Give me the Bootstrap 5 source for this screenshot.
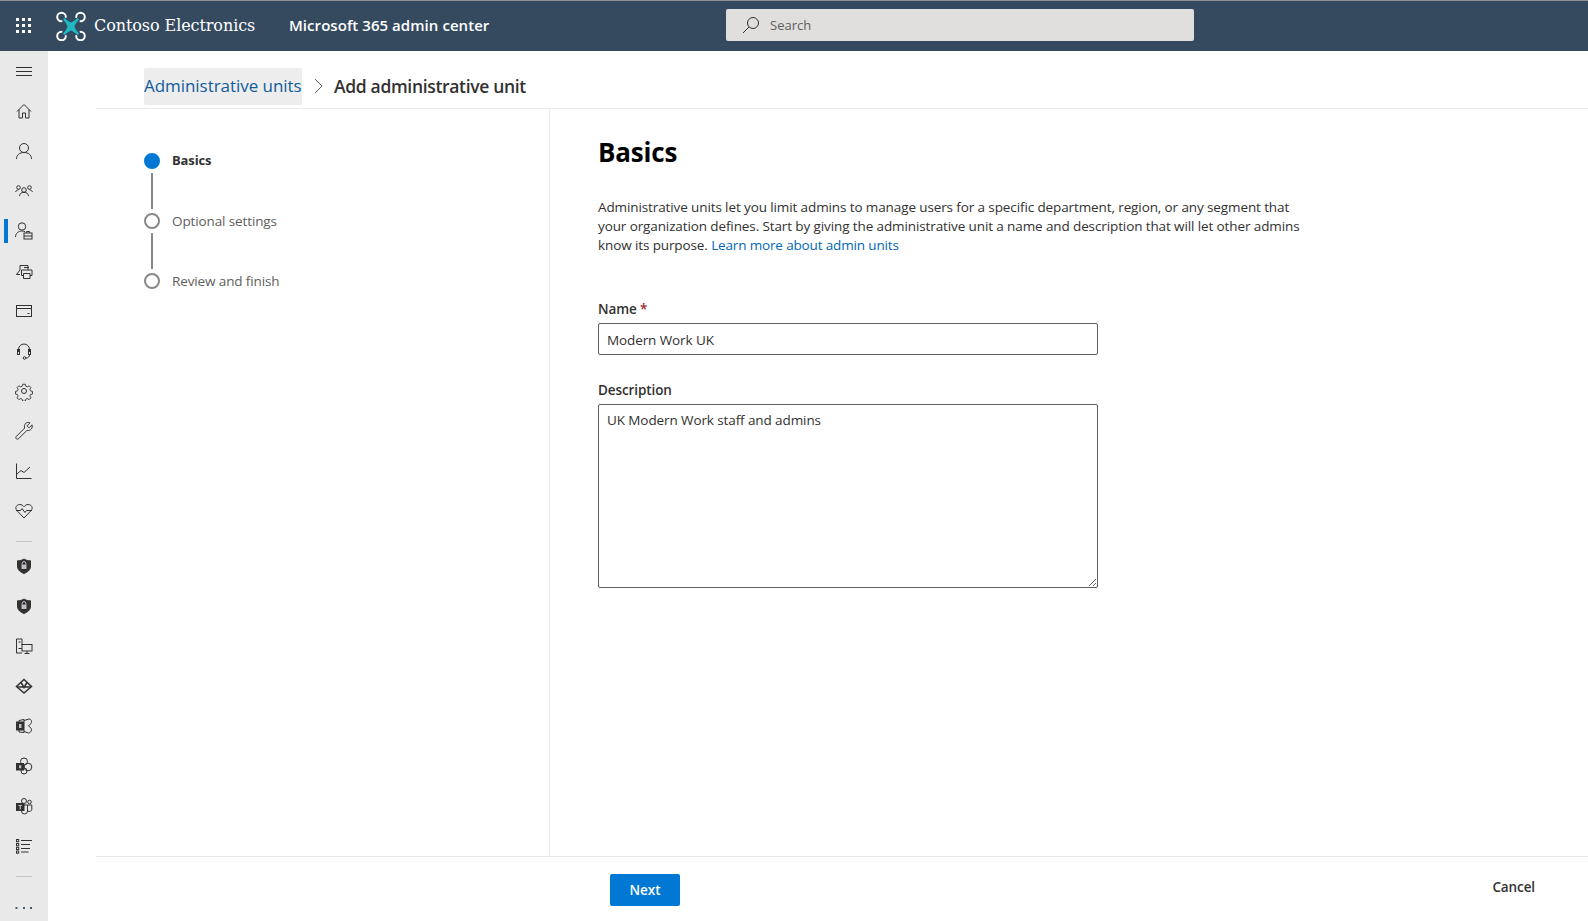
<!DOCTYPE html>
<html lang="en">
<head>
<meta charset="utf-8">
<title>Add administrative unit</title>
<link href="https://cdn.jsdelivr.net/npm/bootstrap@5.3.0/dist/css/bootstrap.min.css" rel="stylesheet">
<style>
html,body{height:100%;}
body{font-family:"Open Sans","Noto Sans",sans-serif;color:#323130;overflow:hidden;background:#fff;font-size:13px;}
.topbar{height:51px;background:#354a5f;border-top:1px solid #8f9396;color:#fff;}
.waffle{width:48px;}
.brand-logo{margin-left:8px;}
.brand-name{font-family:"DejaVu Serif",serif;font-size:16px;margin-left:8px;width:195px;white-space:nowrap;letter-spacing:-.08px;}
.app-name{font-size:15px;font-weight:600;width:437px;white-space:nowrap;letter-spacing:.05px;margin-bottom:2px;}
.search-box{width:468px;height:32px;background:#e1dfdd;border-radius:2px;padding:2px 0 0 16px;color:#605e5c;font-size:13px;margin-bottom:2px;}
.search-box svg{margin:-2px 10px 0 0;}
.shell{height:870px;}
.side{width:48px;background:#e9e9e9;overflow:hidden;}
.side-item{height:40px;flex:0 0 40px;color:#323130;}
.side-item svg{width:20px;height:20px;fill:none;stroke:#323130;stroke-width:1;}
.side-bar-on{left:4px;top:8px;width:4px;height:24px;background:#0078d4;}
.side-rule{width:16px;height:1px;flex:0 0 1px;background:#c8c6c4;margin:10px auto 4px;}
.side-rule2{margin:10px auto 9px;}
.work{margin-left:48px;min-width:0;}
.crumbs{height:58px;border-bottom:1px solid #e8e8e8;padding:13px 0 0 48px;}
.crumb-link{height:37px;background:#ededed;border-radius:2px;color:#0f5c9c;font-size:17px;width:158px;white-space:nowrap;letter-spacing:-.05px;}
.crumb-now{font-size:17.5px;font-weight:600;color:#323130;letter-spacing:-.33px;white-space:nowrap;}
.stage{height:747px;}
.steps{width:454px;border-right:1px solid #e8e8e8;padding:43px 0 0 48px;}
.step-row{height:18px;font-size:13.5px;color:#605e5c;letter-spacing:-.12px;}
.step-dot{width:16px;height:16px;border-radius:50%;border:2px solid #8a8886;margin-right:12px;background:#fff;}
.step-dot-on{background:#0078d4;border-color:#0078d4;}
.step-row.step-on{color:#323130;font-weight:700;font-size:13px;}
.step-line{width:2px;height:36px;background:#8a8886;margin:3px 0 3px 7px;}
.pane{padding:24px 0 0 48px;}
.pane-title{font-size:26px;font-weight:700;color:#000;margin:0 0 27px;line-height:38px;letter-spacing:-.2px;}
.pane-text{font-size:13.5px;line-height:19px;margin:0 0 45px;width:720px;letter-spacing:-.11px;white-space:nowrap;}
.pane-text a{color:#0067b8;text-decoration:none;letter-spacing:-.15px;}
.fld-label{font-size:13.5px;font-weight:600;margin:0 0 4px;line-height:19px;display:block;letter-spacing:-.1px;}
.req{color:#a4262c;}
.fld{width:500px;border:1px solid #605e5c;border-radius:2px;font-size:13.5px;color:#323130;padding:2px 8px 0;letter-spacing:-.1px;box-shadow:none!important;}
.fld-one{height:32px;margin-bottom:26px;}
.fld-many{height:184px;padding-top:6px;line-height:19px;}
.foot{height:65px;border-top:1px solid #e8e8e8;}
.btn-next{margin:17px 0 0 514px;width:70px;height:32px;background:#0078d4;border:0;border-radius:2px;color:#fff;font-size:13.5px;font-weight:600;padding:0;}
.btn-cancel{margin:20px 53px 0 auto;font-size:13.5px;font-weight:600;color:#323130;border:0;padding:0;background:none;height:20px;letter-spacing:-.1px;}
</style>
</head>
<body>
<header class="topbar d-flex align-items-center">
  <div class="waffle d-flex justify-content-center">
    <svg width="16" height="16" viewBox="0 0 16 16" fill="#fff"><rect x="0" y="0" width="3" height="3"/><rect x="6" y="0" width="3" height="3"/><rect x="12" y="0" width="3" height="3"/><rect x="0" y="6" width="3" height="3"/><rect x="6" y="6" width="3" height="3"/><rect x="12" y="6" width="3" height="3"/><rect x="0" y="12" width="3" height="3"/><rect x="6" y="12" width="3" height="3"/><rect x="12" y="12" width="3" height="3"/></svg>
  </div>
  <svg class="brand-logo" width="30" height="30" viewBox="0 0 30 30"><path d="M7 8.500 8.500 7Q13 11 15 11.500 17 11 21.500 7L23 8.500Q19 13 18.500 15.500 19 18 23 22.500L21.500 24Q17 20 15 19.500 13 20 8.500 24L7 22.500Q11 18 11.500 15.500 11 13 7 8.500z" fill="#1fb9c4"/><g fill="none" stroke="#fff" stroke-width="2" stroke-linecap="round"><path d="M5.500 10.300A4.300 4.300 0 1 1 9.800 6"/><path d="M20.200 6A4.300 4.300 0 1 1 24.500 10.300"/><path d="M9.800 25A4.300 4.300 0 1 1 5.500 20.700"/><path d="M24.500 20.700A4.300 4.300 0 1 1 20.200 25"/></g></svg>
  <div class="brand-name">Contoso Electronics</div>
  <div class="app-name">Microsoft 365 admin center</div>
  <div class="search-box d-flex align-items-center">
    <svg width="18" height="18" viewBox="0 0 18 18" fill="none" stroke="#323130" stroke-width="1"><circle cx="11" cy="7" r="5.500"/><path d="M7 11 1 17"/></svg>
    <span>Search</span>
  </div>
</header>
<div class="shell d-flex">
  <nav class="side flex-shrink-0 d-flex flex-column">
    <div class="side-item d-flex align-items-center justify-content-center"><svg viewBox="0 0 20 20"><path d="M2 6.500h16M2 10.500h16M2 14.500h16"/></svg></div>
    <div class="side-item d-flex align-items-center justify-content-center"><svg viewBox="0 0 20 20"><path d="M3 10.500 10 3.500l7 7M5 8.500V17h3.500v-5h3v5H15V8.500"/></svg></div>
    <div class="side-item d-flex align-items-center justify-content-center"><svg viewBox="0 0 20 20"><circle cx="10" cy="7" r="4.500"/><path d="M2.500 18c0-4 3-6.500 7.500-6.500s7.500 2.500 7.500 6.500"/></svg></div>
    <div class="side-item d-flex align-items-center justify-content-center"><svg viewBox="0 0 20 20"><circle cx="10" cy="9" r="2.300"/><circle cx="4.500" cy="6.500" r="1.800"/><circle cx="15.500" cy="6.500" r="1.800"/><path d="M5.500 15c.3-2.500 2-3.700 4.500-3.700s4.200 1.200 4.500 3.700M1.500 11c.8-1.500 1.700-2.200 3-2.200M18.500 11c-.8-1.500-1.700-2.200-3-2.200"/></svg></div>
    <div class="side-item d-flex align-items-center justify-content-center position-relative"><span class="side-bar-on position-absolute"></span><svg viewBox="0 0 20 20"><circle cx="8" cy="5.500" r="3.700"/><path d="M1.500 16c.2-3.800 2.800-6 6.500-6 1.300 0 2.300.3 3 .7"/><rect x="10" y="12" width="8" height="6"/><path d="M12.500 12v-1.500h3V12M10 15h8"/></svg></div>
    <div class="side-item d-flex align-items-center justify-content-center"><svg viewBox="0 0 20 20"><path d="M6 9V4.500h8V9M6 13.500H2.500L6 9"/><path d="M7.500 9h10.500v5.500H7.500z" fill="#e9e9e9"/><path d="M9.500 12.500h6.500v5H9.500z" fill="#e9e9e9"/><path d="M10 6.500h5"/></svg></div>
    <div class="side-item d-flex align-items-center justify-content-center"><svg viewBox="0 0 20 20"><rect x="2.500" y="4.500" width="15" height="11"/><path d="M2.500 7.500h15M13.500 12.500h2"/></svg></div>
    <div class="side-item d-flex align-items-center justify-content-center"><svg viewBox="0 0 20 20"><path d="M4.500 11V8.500a5.500 5.500 0 0 1 11 0V11"/><rect x="3.500" y="8.500" width="2" height="5"/><rect x="14.500" y="8.500" width="2" height="5"/><path d="M15.500 13.500c0 2.500-1.500 3.500-3.500 3.500"/><circle cx="10.500" cy="17" r="1.300"/></svg></div>
    <div class="side-item d-flex align-items-center justify-content-center"><svg viewBox="0 0 20 20"><circle cx="10" cy="10" r="2.500"/><path d="M8.500 2.500h3l.5 2.200 1.700.7 2-1.200 2 2-1.200 2 .7 1.700 2.200.5v3l-2.200.5-.7 1.700 1.200 2-2 2-2-1.200-1.700.7-.5 2.200h-3l-.5-2.200-1.700-.7-2 1.200-2-2 1.200-2-.7-1.700-2.200-.5v-3l2.200-.5.7-1.700-1.200-2 2-2 2 1.200 1.700-.7z" transform="translate(1 1) scale(.9)"/></svg></div>
    <div class="side-item d-flex align-items-center justify-content-center"><svg viewBox="0 0 20 20"><path d="M18 3.800 15 6.800l-2-2 3-3c-2-.8-5-.3-5.500 2.700-.2 1-.1 1.800.2 2.500L2.500 15.200c-1 1.200-.8 2-.2 2.500.6.600 1.500.7 2.500-.2L13 9.300c3.500 1 6-2.300 5-5.500z"/></svg></div>
    <div class="side-item d-flex align-items-center justify-content-center"><svg viewBox="0 0 20 20"><path d="M2.500 2.500v15h15M3 13l4-3.500 3 2 6-5.500"/></svg></div>
    <div class="side-item d-flex align-items-center justify-content-center"><svg viewBox="0 0 20 20"><path d="M10 17 2.800 9.500C.5 6.800 2.700 3.500 5.800 3.500c1.800 0 3.200 1 4.200 2.300 1-1.300 2.400-2.300 4.200-2.300 3.100 0 5.300 3.300 3 6z"/><path d="M2 9.500h4.500L8 7.500l3 4 1.500-2H18"/></svg></div>
    <div class="side-rule"></div>
    <div class="side-item d-flex align-items-center justify-content-center"><svg viewBox="0 0 20 20"><path d="M10 3c2 1.300 4 1.800 6.500 1.800V10c0 4-2.800 6-6.500 7.500C6.300 16 3.500 14 3.500 10V4.800C6 4.800 8 4.300 10 3z" fill="#323130"/><rect x="7.500" y="8.500" width="5" height="4.500" fill="#b9bec4" stroke="none"/><path d="M8.200 8.500V7.300a1.800 1.800 0 0 1 3.600 0v1.200" stroke="#b9bec4"/></svg></div>
    <div class="side-item d-flex align-items-center justify-content-center"><svg viewBox="0 0 20 20"><path d="M10 3c2 1.300 4 1.800 6.500 1.800V10c0 4-2.800 6-6.500 7.500C6.300 16 3.500 14 3.500 10V4.800C6 4.800 8 4.300 10 3z" fill="#323130"/><rect x="7.500" y="8.500" width="5" height="4.500" fill="#b9bec4" stroke="none"/><path d="M8.200 8.500V7.300a1.800 1.800 0 0 1 3.600 0v1.200" stroke="#b9bec4"/></svg></div>
    <div class="side-item d-flex align-items-center justify-content-center"><svg viewBox="0 0 20 20"><path d="M8 17H2.500V3H8v6M4.500 6h2M4.500 12.500H8"/><rect x="8" y="8.500" width="10" height="6.500"/><path d="M13 15v2.500M10.500 17.500h5"/></svg></div>
    <div class="side-item d-flex align-items-center justify-content-center"><svg viewBox="0 0 20 20" style="stroke-width:1.500"><path d="M10 3.500 17.500 10.500 10 17 2.500 10.500z"/><path d="M7 6.500l3 5 3-5M3 11h14"/></svg></div>
    <div class="side-item d-flex align-items-center justify-content-center"><svg viewBox="0 0 20 20"><path d="M10 4.500 15 3c2.500 0 3.500 3 1.500 5l-2 2 2 1.500c2 2 .5 5.500-2 5.500L10 15.500M5 6V4.500L10 3.500V16.500L5 16v-2"/><rect x="2.500" y="6" width="7" height="8" fill="#323130"/><rect x="5" y="8" width="2.500" height="4" fill="#b9bec4" stroke="none"/></svg></div>
    <div class="side-item d-flex align-items-center justify-content-center"><svg viewBox="0 0 20 20"><circle cx="10" cy="5.500" r="3.500"/><circle cx="14" cy="11" r="3.800"/><circle cx="10" cy="15" r="3"/><rect x="2.500" y="7.500" width="7" height="6.500" fill="#323130"/><rect x="5" y="9.300" width="2.300" height="3" fill="#b9bec4" stroke="none"/></svg></div>
    <div class="side-item d-flex align-items-center justify-content-center"><svg viewBox="0 0 20 20"><circle cx="10" cy="5" r="2.500"/><circle cx="15.500" cy="6" r="1.800"/><path d="M7.500 9h6v6a3 3 0 0 1-6 0zM13.500 9h4.300v4.500c0 1.500-2 2.500-4.300 1.500"/><rect x="2.500" y="7.500" width="7.500" height="7" fill="#323130"/><path d="M4.500 9.500h3.500M6.200 9.500v4" stroke="#b9bec4" stroke-width="1.200"/></svg></div>
    <div class="side-item d-flex align-items-center justify-content-center"><svg viewBox="0 0 20 20"><rect x="2.500" y="3.500" width="2.200" height="2.200"/><rect x="2.500" y="7.500" width="2.200" height="2.200"/><rect x="2.500" y="11.300" width="2.200" height="2.200"/><rect x="2.500" y="15" width="2.200" height="2.200"/><path d="M7 4.500h11M7 8.500h9M7 12.500h9M7 16h7.500"/></svg></div>
    <div class="side-rule side-rule2"></div>
    <div class="side-item d-flex justify-content-center"><svg viewBox="0 0 20 20" style="fill:#4a5a6a;stroke:none;margin-top:12px"><rect x="1.500" y="9" width="2" height="2"/><rect x="9" y="9" width="2" height="2"/><rect x="16" y="9" width="2" height="2"/></svg></div>
  </nav>
  <main class="work flex-grow-1 d-flex flex-column">
    <div class="crumbs d-flex align-items-center">
      <a class="crumb-link d-flex align-items-center text-decoration-none" href="#">Administrative units</a>
      <svg class="mx-2" width="16" height="16" viewBox="0 0 16 16" fill="none" stroke="#605e5c"><path d="M5 1l7 7-7 7"/></svg>
      <span class="crumb-now">Add administrative unit</span>
    </div>
    <div class="stage d-flex">
      <aside class="steps flex-shrink-0">
        <div class="step-row d-flex align-items-center step-on"><span class="step-dot step-dot-on"></span>Basics</div>
        <div class="step-line"></div>
        <div class="step-row d-flex align-items-center"><span class="step-dot"></span>Optional settings</div>
        <div class="step-line"></div>
        <div class="step-row d-flex align-items-center"><span class="step-dot"></span>Review and finish</div>
      </aside>
      <section class="pane flex-grow-1">
        <h1 class="pane-title">Basics</h1>
        <p class="pane-text">Administrative units let you limit admins to manage users for a specific department, region, or any segment that<br>your organization defines. Start by giving the administrative unit a name and description that will let other admins<br>know its purpose. <a href="#">Learn more about admin units</a></p>
        <label class="fld-label" for="unit-name">Name <span class="req">*</span></label>
        <input id="unit-name" class="form-control fld fld-one" type="text" value="Modern Work UK">
        <label class="fld-label" for="unit-desc">Description</label>
        <textarea id="unit-desc" class="form-control fld fld-many">UK Modern Work staff and admins</textarea>
      </section>
    </div>
    <div class="foot d-flex align-items-start">
      <button class="btn btn-primary btn-next" type="button">Next</button>
      <button class="btn btn-cancel" type="button">Cancel</button>
    </div>
  </main>
</div>
<script src="https://cdn.jsdelivr.net/npm/bootstrap@5.3.0/dist/js/bootstrap.bundle.min.js"></script>
</body>
</html>
